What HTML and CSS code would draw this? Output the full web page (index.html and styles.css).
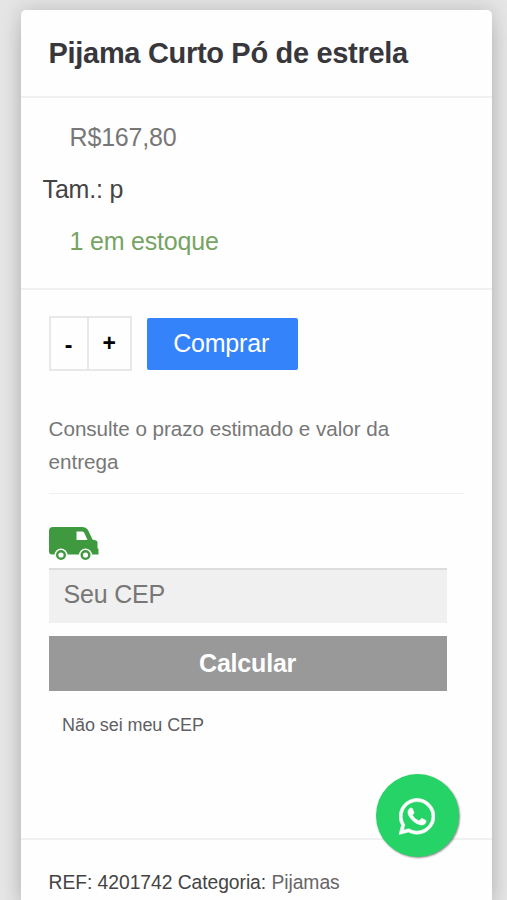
FILE: index.html
```html
<!DOCTYPE html>
<html lang="pt-BR">
<head>
<meta charset="utf-8">
<title>Pijama Curto Pó de estrela</title>
<link rel="stylesheet" href="styles.css">
</head>
<body>
<main class="card">
  <header class="card-header">
    <h1 class="title">Pijama Curto Pó de estrela</h1>
  </header>
  <section class="details">
    <p class="price">R$167,80</p>
    <p class="size">Tam.: p</p>
    <p class="stock">1 em estoque</p>
  </section>
  <section class="purchase">
    <div class="buy-row">
      <div class="quantity">
        <button class="minus" type="button">-</button>
        <button class="plus" type="button">+</button>
      </div>
      <button class="buy" type="button">Comprar</button>
    </div>
    <p class="shipping-text">Consulte o prazo estimado e valor da entrega</p>
    <svg class="van" viewBox="0 0 50 34" aria-hidden="true">
      <path fill="#3f993f" d="M4 0h29q4 0 6 3l4.500 9.500 3.500 1q1.500 .5 1.500 2V21l1 1v5.500H3Q0 27.500 0 24.500V4Q0 0 4 0z"/>
      <path fill="#fff" d="M27.500 4.500H33q1.500 0 2.200 1.300L38.500 13h-11z"/>
      <circle cx="12" cy="28" r="6.500" fill="#fff"/>
      <circle cx="36.500" cy="28" r="6.500" fill="#fff"/>
      <g fill="#fff" stroke="#3f993f" stroke-width="2.400">
        <circle cx="12" cy="28" r="3.800"/>
        <circle cx="36.500" cy="28" r="3.800"/>
      </g>
    </svg>
    <form class="shipping-form">
      <input class="cep" type="text" placeholder="Seu CEP">
      <button class="calculate" type="button">Calcular</button>
      <a class="cep-help">Não sei meu CEP</a>
    </form>
  </section>
  <footer class="meta">REF: 4201742 Categoria: <a class="category">Pijamas</a></footer>
</main>
<a class="whatsapp" aria-label="WhatsApp">
  <svg class="whatsapp-icon" viewBox="0 0 448 512" aria-hidden="true">
    <path fill="#fff" stroke="#fff" stroke-width="8" d="M380.900 97.100C339 55.100 283.200 32 223.900 32c-122.400 0-222 99.600-222 222 0 39.100 10.200 77.300 29.600 111L0 480l117.700-30.900c32.400 17.700 68.900 27 106.100 27h.1c122.300 0 224.100-99.600 224.100-222 0-59.300-25.200-115-67.100-157zm-157 341.600c-33.200 0-65.700-8.900-94-25.700l-6.700-4-69.800 18.300L72 359.200l-4.400-7c-18.500-29.400-28.200-63.300-28.200-98.200 0-101.700 82.800-184.500 184.600-184.500 49.300 0 95.600 19.200 130.400 54.100 34.800 34.900 56.200 81.200 56.100 130.500 0 101.800-84.900 184.600-186.600 184.600z"/>
    <path fill="#fff" stroke="#fff" stroke-width="8" d="M325.100 300.500c-5.500-2.800-32.800-16.200-37.900-18-5.100-1.900-8.800-2.800-12.500 2.800-3.700 5.600-14.300 18-17.600 21.800-3.200 3.700-6.500 4.200-12 1.400-32.600-16.300-54-29.100-75.500-66-5.700-9.800 5.700-9.100 16.300-30.300 1.800-3.700.9-6.900-.5-9.700-1.400-2.800-12.500-30.100-17.100-41.200-4.500-10.800-9.100-9.300-12.500-9.500-3.200-.2-6.900-.2-10.600-.2-3.700 0-9.700 1.400-14.800 6.900-5.100 5.600-19.400 19-19.400 46.300 0 27.300 19.900 53.700 22.600 57.400 2.800 3.700 39.100 59.700 94.800 83.800 35.200 15.200 49 16.500 66.600 13.900 10.700-1.600 32.800-13.400 37.400-26.400 4.600-13 4.600-24.100 3.200-26.400-1.300-2.500-5-3.900-10.500-6.600z"/>
  </svg>
</a>
</body>
</html>
```
FILE: styles.css
```css
* {
  box-sizing: border-box;
}

html {
  overflow: hidden;
}

body {
  height: 900px;
  margin: 0;
  padding: 10px 15.500px 0 20.600px;
  overflow: hidden;
  background: #e5e5e5;
  font-family: "Liberation Sans", Arial, sans-serif;
  font-size: 25px;
  letter-spacing: -0.2px;
  color: #444;
}

button,
input {
  margin: 0;
  border: 0;
  font: inherit;
  letter-spacing: inherit;
}

p,
h1 {
  margin: 0;
}

.card {
  height: 890px;
  background: #fefefe;
  border-radius: 5px 5px 0 0;
  box-shadow: 0 0 20px rgba(0, 0, 0, 0.18), 0 20px 20px rgba(0, 0, 0, 0.08);
}

.card-header {
  height: 88px;
  padding: 0 28px;
  border-bottom: 2px solid #f0f0f0;
}

.title {
  font-size: 29px;
  letter-spacing: -0.320px;
  line-height: 86px;
  color: #37373c;
  white-space: nowrap;
}

.details {
  height: 192px;
  padding: 13px 22px 0;
  border-bottom: 2px solid #f0f0f0;
  line-height: 52px;
}

.price,
.stock {
  padding-left: 27px;
}

.price {
  color: #777;
}

.stock {
  color: #77a464;
}

.purchase {
  height: 550px;
  padding: 26px 28px 0;
  border-bottom: 2px solid #f0f0f0;
}

.buy-row {
  display: flex;
  align-items: center;
  gap: 15px;
  height: 55px;
}

.quantity {
  display: flex;
  width: 83px;
  height: 55px;
  border: 2px solid #e8e8e8;
}

.minus,
.plus {
  padding: 0;
  background: transparent;
  color: #000;
  font-size: 23px;
  font-weight: bold;
}

.minus {
  width: 38px;
  padding-top: 3px;
  border-right: 2px solid #e8e8e8;
}

.plus {
  flex: 1;
}

.buy {
  width: 151px;
  height: 52px;
  padding: 0 2px 0 0;
  background: #3583fb;
  border-radius: 2px;
  color: #fff;
}

.shipping-text {
  height: 82px;
  margin-top: 41px;
  border-bottom: 1px solid #f0f0f0;
  font-size: 20.650px;
  letter-spacing: -0.040px;
  line-height: 33px;
  color: #777;
}

.van {
  display: block;
  width: 50px;
  height: 34px;
  margin-top: 33px;
}

.shipping-form {
  display: flex;
  flex-direction: column;
  width: 398px;
  margin-top: 7px;
}

.cep {
  height: 55px;
  padding: 0 15px 4px;
  background: #f0f0f0;
  border-top: 2px solid #ddd;
  border-radius: 0;
  color: #777;
}

.cep::placeholder {
  color: #777;
}

.calculate {
  height: 55px;
  margin-top: 13px;
  background: #999;
  color: #fff;
  font-weight: bold;
}

.cep-help {
  margin-top: 17px;
  padding-left: 13.500px;
  font-size: 18px;
  letter-spacing: -0.080px;
  line-height: 34px;
  color: #5f5f64;
}

.meta {
  padding: 27px 28px 0;
  font-size: 19.300px;
  letter-spacing: -0.050px;
  line-height: 32px;
  color: #444;
}

.category {
  color: #666;
}

.whatsapp {
  position: fixed;
  top: 774px;
  left: 375.500px;
  display: flex;
  align-items: center;
  justify-content: center;
  width: 83px;
  height: 83px;
  padding-top: 2px;
  border-radius: 50%;
  background: #25d366;
  box-shadow: 1px 1px 2px rgba(0, 0, 0, 0.45);
}

.whatsapp-icon {
  width: 36px;
  height: 41px;
}
```
